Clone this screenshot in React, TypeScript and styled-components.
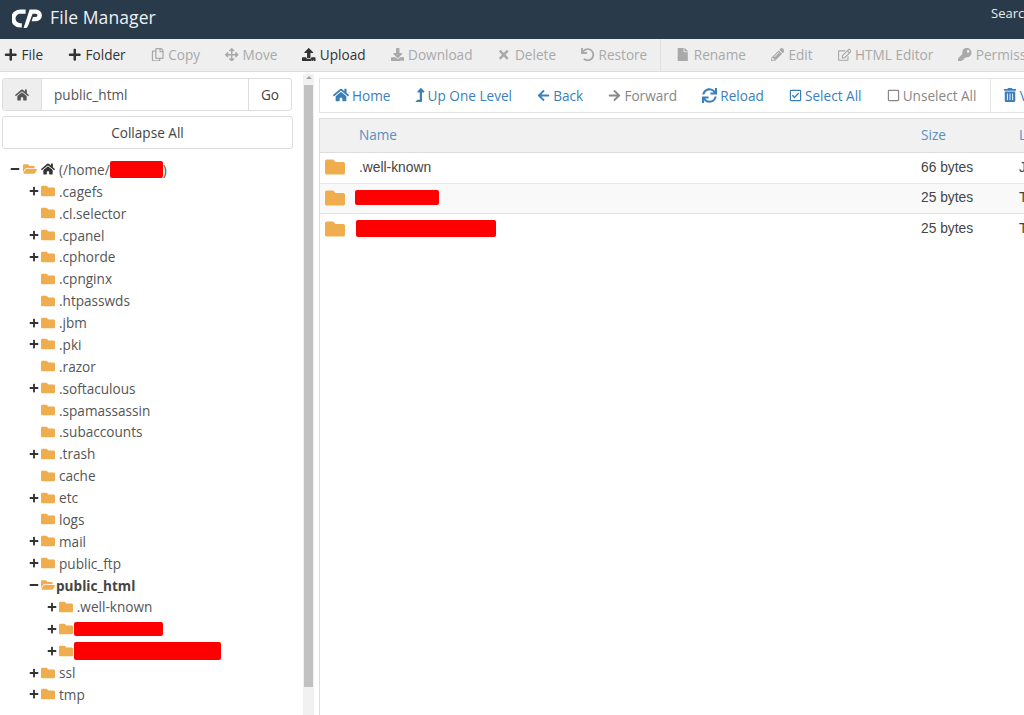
import React from "react";
import styled, { createGlobalStyle } from "styled-components";
import {
  FaPlus, FaMinus, FaRegCopy, FaArrowsAlt, FaUpload, FaDownload, FaTimes, FaUndo, FaFile,
  FaPencilAlt, FaRegEdit, FaKey, FaHome, FaArrowLeft, FaArrowRight, FaSync, FaRegCheckSquare,
  FaRegSquare, FaTrashAlt, FaFolder, FaFolderOpen, FaLevelUpAlt,
} from "react-icons/fa";

const Global = createGlobalStyle`
  html, body { margin: 0; padding: 0; height: 715px; overflow: hidden; background: #fff; }
  body { font-family: "Open Sans", "Liberation Sans", sans-serif; font-size: 13.6px; color: #333; }
  * { box-sizing: border-box; }
`;

const Page = styled.div`
  width: 1024px; height: 715px; overflow: hidden; display: flex; flex-direction: column;
`;
const Header = styled.header`
  height: 39px; flex: none; background: #293a4a; color: #f4f6f8; display: flex; align-items: center;
  padding: 0 0 5px 12px;
`;
const Logo = styled.svg`width: 30px; height: 19px; flex: none; margin-top: 2px;`;
const Title = styled.h1`
  margin: 0 0 0 8px; font-size: 17.5px; font-weight: 400; letter-spacing: 0.1px; color: #eef1f4;
`;
const HeaderSearch = styled.span`
  margin-left: auto; font-size: 13px; white-space: nowrap; width: 33px; overflow: hidden; color: #e8ecef; margin-bottom: 8px;
`;
const Toolbar = styled.nav`
  height: 33px; flex: none; background: #efefef; border-bottom: 1px solid #dcdcdc; display: flex; align-items: center;
  padding: 0 0 1px 4px; white-space: nowrap; overflow: hidden;
`;
const ToolItem = styled.span<{ $off?: boolean }>`
  display: inline-flex; align-items: center; gap: 4px; flex: none; margin-right: 25px;
  color: ${(p) => (p.$off ? "#a9a9a9" : "#333")};
  svg { font-size: 13.5px; flex: none; }
`;
const ToolDivider = styled.span`
  width: 1px; height: 33px; background: #e0e0e0; flex: none; margin: 0 15px 0 -12px;
`;
const Body = styled.main`
  flex: 1; min-height: 0; display: flex;
`;
const Side = styled.aside`
  width: 303px; flex: none; padding: 6px 11px 0 2px; overflow: hidden;
`;
const PathGroup = styled.div`
  display: flex; height: 33px; border: 1px solid #ddd; border-radius: 3px; overflow: hidden;
`;
const PathHome = styled.span`
  width: 39px; background: #eee; display: flex; align-items: center; justify-content: center;
  border-right: 1px solid #ddd; color: #555; font-size: 14px;
`;
const PathField = styled.span`
  flex: 1; padding-left: 12px; display: flex; align-items: center; color: #555;
`;
const PathGo = styled.span`
  width: 43px; border-left: 1px solid #ddd; display: flex; align-items: center; justify-content: center; color: #444;
`;
const CollapseButton = styled.div`
  margin-top: 5px; width: 291px; height: 33px; border: 1px solid #ddd; border-radius: 3px; display: flex; align-items: center;
  justify-content: center; color: #444;
`;
const Tree = styled.ul`
  list-style: none; margin: 9.5px 0 0; padding: 0;
`;
const treeIndent = [8, 27, 44.8];
const TreeRow = styled.li<{ $depth: number }>`
  height: 21.875px; display: flex; align-items: center; padding-left: ${(p) => treeIndent[p.$depth]}px;
  color: #555; white-space: nowrap;
`;
const Toggle = styled.span`
  width: 12px; flex: none; display: inline-flex; align-items: center; color: #333; font-size: 10px;
`;
const RootToggle = styled(Toggle)`
  margin-right: 1px;
`;
const FolderGlyph = styled.span`
  color: #f0ad4e; font-size: 14px; display: inline-flex; align-items: center; margin-right: 4px; flex: none;
`;
const HomeGlyph = styled(FolderGlyph)`
  color: #333;
`;
const TreeLabel = styled.span<{ $bold?: boolean }>`
  font-weight: ${(p) => (p.$bold ? 700 : 400)};
  color: ${(p) => (p.$bold ? "#444" : "#555")};
  margin-left: ${(p) => (p.$bold ? "-3px" : "0")};
`;
const Redact = styled.span<{ $w: number; $h: number }>`
  display: inline-block; width: ${(p) => p.$w}px; height: ${(p) => p.$h}px; background: #fe0000; border-radius: 2px; flex: none;
`;
const TreeRedact = styled(Redact)`
  margin-left: -3px;
`;
const Track = styled.div`
  width: 11px; flex: none; background: #f1f1f1; position: relative; display: flex; flex-direction: column; margin-top: 2px; padding-left: 1px;
  &::before {
    content: ""; position: absolute; left: 3px; top: 2px; width: 0; height: 0;
    border-left: 3px solid transparent; border-right: 3px solid transparent; border-bottom: 3px solid #a3a3a3;
  }
`;
const Thumb = styled.div`
  margin-top: 11px; width: 9px; height: 602px; background: #c1c1c1; flex: none;
`;
const Content = styled.section`
  flex: 1; min-width: 0; padding: 6px 0 0 5px; overflow: hidden; display: flex; flex-direction: column;
`;
const ActionBar = styled.div`
  height: 35px; flex: none; border: 1px solid #e3e3e3; border-right: none; display: flex; align-items: center; padding: 0 0 1px 13px; white-space: nowrap; overflow: hidden;
`;
const ActionItem = styled.span<{ $off?: boolean }>`
  display: inline-flex; align-items: center; gap: 3px; flex: none; margin-right: 25.2px;
  color: ${(p) => (p.$off ? "#888" : "#3a7fba")};
  svg { flex: none; }
`;
const UpIcon = styled(FaLevelUpAlt)`
  margin: 0 -2.5px;
`;
const ActionDivider = styled.span`
  width: 1px; height: 33px; background: #e6e6e6; flex: none; margin: 0 12px 0 -12px;
`;
const Table = styled.div`
  margin-top: 5px; flex: 1; border-left: 1px solid #ddd;
`;
const HeadRow = styled.div`
  height: 35px; background: #f1f1f1; border-top: 1px solid #ddd; border-bottom: 1px solid #ddd; display: grid; grid-template-columns: 39px 562px 98px 1fr; align-items: center;
  color: #5a8fc0; white-space: nowrap; overflow: hidden; padding-bottom: 2px;
`;
const FileRow = styled.div<{ $alt?: boolean }>`
  height: 30.5px; display: grid; grid-template-columns: 39px 562px 98px 1fr; align-items: center; font-family: "Liberation Sans", Arial, sans-serif; font-size: 13.8px; color: #444;
  background: ${(p) => (p.$alt ? "#f9f9f9" : "#fff")}; border-bottom: 1px solid ${(p) => (p.$alt ? "#e4e4e4" : "#e8e8e8")};
  white-space: nowrap; overflow: hidden; padding-bottom: 1px;
`;
const LastFileRow = styled(FileRow)`
  border-bottom: none;
`;
const RowFolder = styled.span`
  color: #f0ad4e; font-size: 20px; padding-left: 5px; display: flex; align-items: center;
`;
const RowRedact = styled(Redact)<{ $shift: number }>`
  display: block; margin-left: ${(p) => p.$shift}px;
`;

type TreeItem = { label?: string; depth: number; toggle?: "plus" | "minus"; open?: boolean; bold?: boolean; redact?: number; redactH?: number };
const treeItems: TreeItem[] = [
  { label: ".cagefs", depth: 1, toggle: "plus" },
  { label: ".cl.selector", depth: 1 },
  { label: ".cpanel", depth: 1, toggle: "plus" },
  { label: ".cphorde", depth: 1, toggle: "plus" },
  { label: ".cpnginx", depth: 1 },
  { label: ".htpasswds", depth: 1 },
  { label: ".jbm", depth: 1, toggle: "plus" },
  { label: ".pki", depth: 1, toggle: "plus" },
  { label: ".razor", depth: 1 },
  { label: ".softaculous", depth: 1, toggle: "plus" },
  { label: ".spamassassin", depth: 1 },
  { label: ".subaccounts", depth: 1 },
  { label: ".trash", depth: 1, toggle: "plus" },
  { label: "cache", depth: 1 },
  { label: "etc", depth: 1, toggle: "plus" },
  { label: "logs", depth: 1 },
  { label: "mail", depth: 1, toggle: "plus" },
  { label: "public_ftp", depth: 1, toggle: "plus" },
  { label: "public_html", depth: 1, toggle: "minus", open: true, bold: true },
  { label: ".well-known", depth: 2, toggle: "plus" },
  { depth: 2, toggle: "plus", redact: 89, redactH: 14 },
  { depth: 2, toggle: "plus", redact: 147, redactH: 18 },
  { label: "ssl", depth: 1, toggle: "plus" },
  { label: "tmp", depth: 1, toggle: "plus" },
];

const tools: { icon: React.ReactNode; text: string; off?: boolean }[] = [
  { icon: <FaPlus />, text: "File" },
  { icon: <FaPlus />, text: "Folder" },
  { icon: <FaRegCopy />, text: "Copy", off: true },
  { icon: <FaArrowsAlt />, text: "Move", off: true },
  { icon: <FaUpload />, text: "Upload" },
  { icon: <FaDownload />, text: "Download", off: true },
  { icon: <FaTimes />, text: "Delete", off: true },
  { icon: <FaUndo />, text: "Restore", off: true },
];
const tools2: { icon: React.ReactNode; text: string }[] = [
  { icon: <FaFile />, text: "Rename" },
  { icon: <FaPencilAlt />, text: "Edit" },
  { icon: <FaRegEdit />, text: "HTML Editor" },
  { icon: <FaKey />, text: "Permissions" },
];
const actions: { icon: React.ReactNode; text: string; off?: boolean }[] = [
  { icon: <FaHome size={16} />, text: "Home" },
  { icon: <UpIcon size={14} />, text: "Up One Level" },
  { icon: <FaArrowLeft size={13} />, text: "Back" },
  { icon: <FaArrowRight size={13} />, text: "Forward", off: true },
  { icon: <FaSync size={15} />, text: "Reload" },
  { icon: <FaRegCheckSquare size={13} />, text: "Select All" },
  { icon: <FaRegSquare size={13} />, text: "Unselect All", off: true },
];

export default function App() {
  return (
    <Page>
      <Global />
      <Header>
        <Logo viewBox="0 0 30 19" aria-label="cPanel">
          <path fill="none" stroke="#fff" strokeWidth="4.4" d="M13.6 2.6H8.2a6.9 6.9 0 0 0 0 13.8h1.6" />
          <path fill="#fff" d="M11.6 19 17.6.4H24a5.9 5.9 0 0 1 0 11.8h-4.4l1.4-4.2h2.8a1.6 1.6 0 0 0 0-3.3h-3.2L16.2 16.4c-.5 1.6-1.8 2.6-3.2 2.6Z" />
        </Logo>
        <Title>File Manager</Title>
        <HeaderSearch>Search</HeaderSearch>
      </Header>
      <Toolbar>
        {tools.map((t) => (
          <ToolItem key={t.text} $off={t.off}>{t.icon}{t.text}</ToolItem>
        ))}
        <ToolDivider />
        {tools2.map((t) => (
          <ToolItem key={t.text} $off>{t.icon}{t.text}</ToolItem>
        ))}
      </Toolbar>
      <Body>
        <Side>
          <PathGroup>
            <PathHome><FaHome /></PathHome>
            <PathField>public_html</PathField>
            <PathGo>Go</PathGo>
          </PathGroup>
          <CollapseButton>Collapse All</CollapseButton>
          <Tree>
            <TreeRow $depth={0}>
              <RootToggle><FaMinus /></RootToggle>
              <FolderGlyph><FaFolderOpen /></FolderGlyph>
              <HomeGlyph><FaHome /></HomeGlyph>
              <TreeLabel>(/home/</TreeLabel>
              <Redact $w={53} $h={17} />
              <TreeLabel>)</TreeLabel>
            </TreeRow>
            {treeItems.map((item, i) => (
              <TreeRow key={i} $depth={item.depth}>
                <Toggle>{item.toggle === "plus" ? <FaPlus /> : item.toggle === "minus" ? <FaMinus /> : null}</Toggle>
                <FolderGlyph>{item.open ? <FaFolderOpen /> : <FaFolder />}</FolderGlyph>
                {item.redact ? <TreeRedact $w={item.redact} $h={item.redactH ?? 17} /> : <TreeLabel $bold={item.bold}>{item.label}</TreeLabel>}
              </TreeRow>
            ))}
          </Tree>
        </Side>
        <Track><Thumb /></Track>
        <Content>
          <ActionBar>
            {actions.map((a) => (
              <ActionItem key={a.text} $off={a.off}>{a.icon}{a.text}</ActionItem>
            ))}
            <ActionDivider />
            <ActionItem><FaTrashAlt size={14} />View Trash</ActionItem>
          </ActionBar>
          <Table>
            <HeadRow><span /><span>Name</span><span>Size</span><span>Last Modified</span></HeadRow>
            <FileRow>
              <RowFolder><FaFolder /></RowFolder><span>.well-known</span><span>66 bytes</span><span>Jan</span>
            </FileRow>
            <FileRow $alt>
              <RowFolder><FaFolder /></RowFolder><span><RowRedact $w={84} $h={15} $shift={-4} /></span><span>25 bytes</span><span>Today</span>
            </FileRow>
            <LastFileRow>
              <RowFolder><FaFolder /></RowFolder><span><RowRedact $w={140} $h={17} $shift={-3} /></span><span>25 bytes</span><span>Today</span>
            </LastFileRow>
          </Table>
        </Content>
      </Body>
    </Page>
  );
}
